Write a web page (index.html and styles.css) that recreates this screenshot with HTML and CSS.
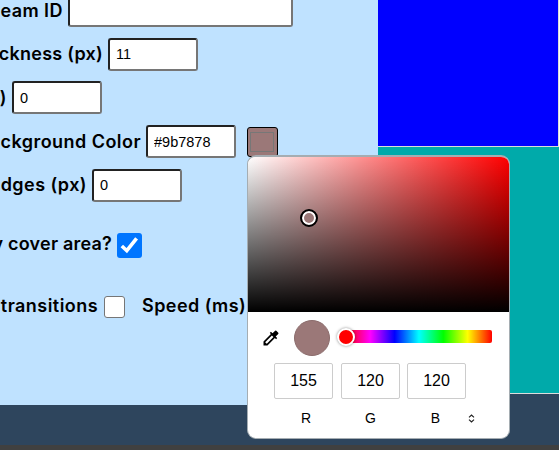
FILE: index.html
```html
<!DOCTYPE html>
<html lang="en">
<head>
<meta charset="utf-8">
<title>Settings</title>
<link rel="stylesheet" href="styles.css">
</head>
<body>
<main class="workspace">
  <form class="settings">
    <div class="row"><label class="l-id">eam ID</label><input class="field wide" type="text"></div>
    <div class="row"><label class="l-thick">ckness (px)</label><input class="field" type="text" value="11"></div>
    <div class="row"><label class="l-paren">)</label><input class="field" type="text" value="0"></div>
    <div class="row"><label class="l-color">ckground Color</label><input class="field" type="text" value="#9b7878"><span class="swatch"><i></i></span></div>
    <div class="row"><label class="l-edges">dges (px)</label><input class="field" type="text" value="0"></div>
    <div class="row cover"><label class="l-cover">y cover area?</label><span class="check on"><svg viewBox="0 0 25 25"><path d="M4.8 13 9.8 17.7 19.6 5.3" fill="none" stroke="#fff" stroke-width="3.6"/></svg></span></div>
    <div class="row trans"><label class="l-trans">transitions</label><span class="check"></span><label class="l-speed">Speed (ms)</label></div>
  </form>
  <aside class="preview"><div class="blue"></div><div class="teal"></div></aside>
</main>
<footer class="strip"></footer>
<section class="picker">
  <div class="shade"><span class="ring"></span></div>
  <div class="tools">
    <svg class="dropper" viewBox="0 0 24 24"><path d="m20.71 5.63-2.34-2.34a1 1 0 0 0-1.41 0l-3.12 3.12-1.93-1.91-1.41 1.41 1.42 1.42L3 16.25V21h4.75l8.92-8.92 1.42 1.42 1.41-1.41-1.92-1.92 3.12-3.12c.4-.4.4-1.03.01-1.42zM6.92 19 5 17.08l8.06-8.06 1.92 1.92L6.92 19z"/></svg>
    <span class="current"></span>
    <div class="hue"><span class="thumb"></span></div>
  </div>
  <div class="values">
    <div class="channel"><span class="num">155</span><span>R</span></div>
    <div class="channel"><span class="num">120</span><span>G</span></div>
    <div class="channel"><span class="num">120</span><span>B</span></div>
    <svg class="toggle" viewBox="0 0 7 9"><path d="M1 3.4 3.5 1 6 3.4M1 5.6 3.5 8 6 5.6" fill="none" stroke="#222" stroke-width="1.2"/></svg>
  </div>
</section>
</body>
</html>
```
FILE: styles.css
```css
* { box-sizing: border-box; }
body {
  margin: 0;
  width: 559px;
  height: 450px;
  overflow: hidden;
  position: relative;
  background: #2e455d;
  font-family: "Liberation Sans", Arial, sans-serif;
}
.workspace { display: flex; height: 405px; }
.settings {
  width: 378px;
  height: 405px;
  margin: 0;
  overflow: hidden;
  background: #bfe2ff;
}
.row { display: flex; align-items: center; height: 33px; margin-bottom: 10.7px; }
.row:first-child { margin-top: -6px; }
label {
  display: flex;
  justify-content: flex-end;
  padding-right: 5px;
  font: 600 18px/24px Inter, sans-serif;
  letter-spacing: .45px;
  color: #000;
  white-space: nowrap;
  flex: none;
}
.l-id { width: 68px; }
.l-thick { width: 108px; letter-spacing: .25px; }
.l-paren { width: 12px; }
.l-color { width: 146px; }
.l-edges { width: 92px; }
.l-cover { width: 117px; letter-spacing: .2px; }
.l-trans { width: 104px; padding-right: 6px; }
.l-speed { margin-left: 17px; padding: 0; }
.field {
  width: 90px;
  height: 33px;
  padding: 1px 6px;
  border: 2px solid;
  border-color: #222 #767676 #767676 #222;
  border-radius: 3px;
  background: #fff;
  color: #000;
  font: 14.5px "Liberation Sans", Arial, sans-serif;
}
.wide { width: 225px; }
.swatch {
  width: 31px;
  height: 30px;
  margin: 1px 0 0 11px;
  padding: 4px 3px 3px 2px;
  border: 1px solid #000;
  border-radius: 3px;
  background: #9b7878;
}
.swatch i { display: block; width: 24px; height: 20px; border: 1px solid #777; }
.cover { margin-top: 26px; margin-bottom: 29px; }
.check {
  flex: none;
  width: 21px;
  height: 22px;
  margin-top: 2px;
  border: 1px solid #767676;
  border-radius: 3px;
  background: #fff;
}
.check.on { width: 25px; height: 25px; border: 0; background: #0075ff; }
.check svg { display: block; }
.preview { width: 181px; }
.blue {
  height: 147px;
  background: #00f;
  border-right: 1px solid #dcdcdc;
  border-bottom: 1px solid #dcdcdc;
}
.teal { height: 247px; background: #00aaaa; border-bottom: 1px solid #dcdcdc; }
.strip { height: 45px; border-bottom: 5px solid #404040; }
.picker {
  position: absolute;
  left: 247px;
  top: 155px;
  width: 263px;
  height: 284px;
  overflow: hidden;
  border: 1px solid #a5adb2;
  border-top-width: 2px;
  border-radius: 9px;
  background: #fff;
}
.shade {
  position: relative;
  height: 155px;
  background: linear-gradient(to top, #000, transparent), linear-gradient(to right, #fff, #f00);
}
.ring {
  position: absolute;
  left: 52px;
  top: 52px;
  width: 18px;
  height: 18px;
  border: 2px solid #000;
  border-radius: 50%;
  background: #9b7878;
  box-shadow: inset 0 0 0 2px #fff;
}
.tools { display: flex; align-items: center; height: 51px; padding-left: 13px; }
.dropper { width: 20px; height: 20px; }
.current {
  width: 36px;
  height: 36px;
  margin: 1px 0 0 13px;
  border: 1px solid #8b6c6c;
  border-radius: 50%;
  background: #9b7878;
}
.hue {
  display: flex;
  align-items: center;
  width: 146px;
  height: 13px;
  margin: 0 0 2px 16px;
  border-radius: 2px;
  background: linear-gradient(to right, #f00, #f0f, #00f, #0ff, #0f0, #ff0, #f00);
}
.thumb {
  flex: none;
  width: 18px;
  height: 18px;
  margin-left: -9px;
  border: 2px solid #fff;
  border-radius: 50%;
  background: #f00;
  box-shadow: 0 0 3px rgba(0,0,0,.45);
}
.values { display: flex; padding-left: 26px; }
.channel {
  width: 59px;
  margin-right: 8px;
  text-align: center;
  font-size: 14px;
  line-height: 18px;
}
.channel:nth-child(3) { margin-right: 2px; margin-left: -1px; }
.num {
  display: block;
  height: 36px;
  margin-bottom: 10px;
  border: 1px solid #ccc;
  border-radius: 2px;
  font-size: 16px;
  line-height: 34px;
}
.channel span:last-child { display: block; padding-left: 5px; }
.channel:nth-child(2) span:last-child { padding-left: 0; }
.channel:nth-child(3) span:last-child { padding-left: 0; padding-right: 2px; }
.toggle { width: 7px; height: 9px; margin-top: 51px; }
```
